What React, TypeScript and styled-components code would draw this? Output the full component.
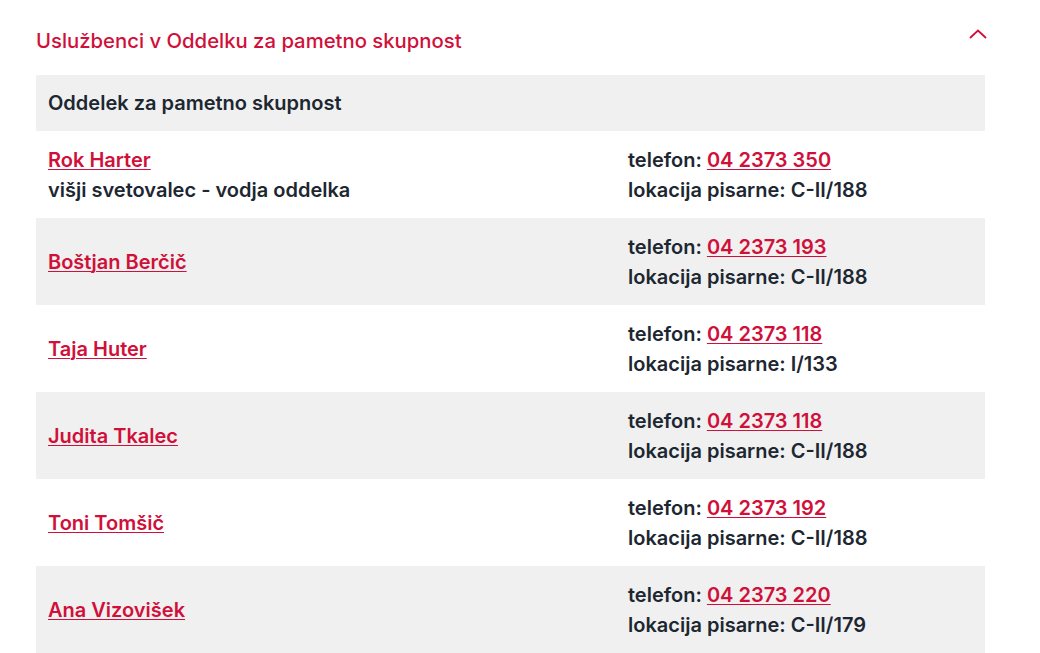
import React from "react";
import styled, { createGlobalStyle } from "styled-components";

const people = [
  { name: "Rok Harter", role: "višji svetovalec - vodja oddelka", phone: "04 2373 350", office: "C-II/188" },
  { name: "Boštjan Berčič", phone: "04 2373 193", office: "C-II/188" },
  { name: "Taja Huter", phone: "04 2373 118", office: "I/133" },
  { name: "Judita Tkalec", phone: "04 2373 118", office: "C-II/188" },
  { name: "Toni Tomšič", phone: "04 2373 192", office: "C-II/188" },
  { name: "Ana Vizovišek", phone: "04 2373 220", office: "C-II/179" },
];

const App = () => (
  <>
    <GlobalStyle />
    <Section>
      <Header>
        <Title>Uslužbenci v Oddelku za pametno skupnost</Title>
        <Toggle aria-label="Skrij">
          <svg width="18" height="10" viewBox="0 0 18 10">
            <polyline points="1,9 9,1.5 17,9" fill="none" stroke="#d0103a" strokeWidth="1.8" />
          </svg>
        </Toggle>
      </Header>
      <Table>
        <Department>Oddelek za pametno skupnost</Department>
        {people.map((p, i) => (
          <Row key={p.name} $shaded={i % 2 === 1}>
            <Who>
              <Link href="#">{p.name}</Link>
              {p.role && <span>{p.role}</span>}
            </Who>
            <Contact>
              <span>
                telefon: <Link href="#">{p.phone}</Link>
              </span>
              <span>lokacija pisarne: {p.office}</span>
            </Contact>
          </Row>
        ))}
      </Table>
    </Section>
  </>
);

export default App;

const GlobalStyle = createGlobalStyle`
  body {
    margin: 0;
    background: #fff;
    font-family: Inter, "Open Sans", sans-serif;
    color: #1d2731;
  }
`;

const Section = styled.section`
  width: 949px;
  padding: 20px 0 0 36px;
`;

const Header = styled.div`
  display: flex;
  align-items: center;
  justify-content: space-between;
  height: 40px;
  margin-bottom: 15px;
`;

const Title = styled.h2`
  margin: 0;
  font-size: 20.3px;
  font-weight: 500;
  color: #d0103a;
`;

const Toggle = styled.button`
  background: transparent;
  border: none;
  padding: 0;
  margin-right: -2px;
  margin-bottom: 12px;
  display: flex;
  cursor: pointer;
`;

const Table = styled.div`
  display: flex;
  flex-direction: column;
`;

const Department = styled.div`
  background: #f0f0f0;
  height: 56px;
  display: flex;
  align-items: center;
  padding: 0 12px;
  font-size: 20px;
  font-weight: 600;
`;

const Row = styled.div<{ $shaded: boolean }>`
  display: grid;
  grid-template-columns: 580px 1fr;
  align-items: center;
  height: 87px;
  padding: 0 12px;
  background: ${(p) => (p.$shaded ? "#f0f0f0" : "#fff")};
  font-size: 20px;
  font-weight: 600;
  line-height: 30px;
`;

const Who = styled.div`
  display: flex;
  flex-direction: column;
  align-items: flex-start;
`;

const Contact = styled.div`
  display: flex;
  flex-direction: column;
`;

const Link = styled.a`
  color: #d0103a;
  text-decoration: underline;
  text-underline-offset: 2px;
  text-decoration-thickness: 1px;
`;
